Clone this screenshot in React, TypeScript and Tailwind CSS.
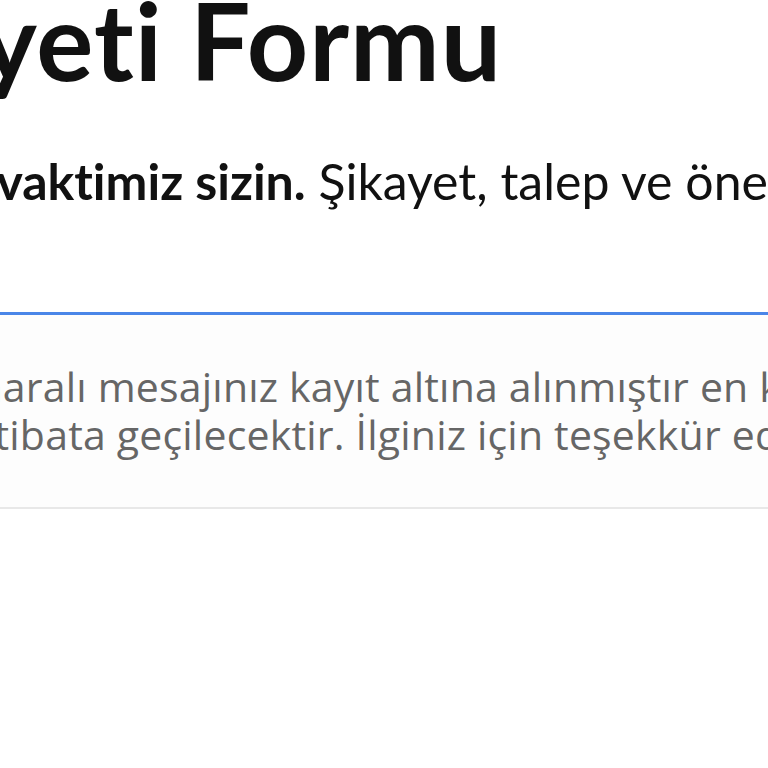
import React from "react";

export default function App() {
  return (
    <div className="w-[768px] h-[768px] overflow-hidden bg-white">
      <div className="flex flex-col w-[1400px]">
        <h1
          className="whitespace-nowrap text-[107px] leading-none font-bold tracking-[1px] [font-variant-ligatures:none] text-[#111] ml-[-219px] mt-[-14px] h-[140px]"
          style={{ fontFamily: "Lato, 'Noto Sans', sans-serif" }}
        >
          Şikayeti Formu
        </h1>
        <p
          className="whitespace-nowrap text-[50px] leading-none text-[#111] [font-variant-ligatures:none] ml-[-110px] mt-[30px] h-[50px]"
          style={{ fontFamily: "Lato, 'Noto Sans', sans-serif" }}
        >
          <span className="font-bold">Tüm vaktimiz sizin.</span> Şikayet, talep ve önerilerinizi bize iletin.
        </p>
        <div className="mt-[106px] border-t-[3px] border-[#4a86e8] w-[1400px]" />
        <div className="bg-[#fdfdfd] border-b-2 border-[#e8e8e8] pt-[47px] pb-[49px] w-[1400px]">
          <p
            className="text-[41px] leading-[48px] text-[#666] whitespace-nowrap tracking-[0.2px] [font-stretch:90%]"
            style={{ fontFamily: "'Open Sans', Roboto, sans-serif" }}
          >
            <span className="block ml-[-86px]">numaralı mesajınız kayıt altına alınmıştır en kısa sürede sizinle</span>
            <span className="block ml-[-33px]">irtibata geçilecektir. İlginiz için teşekkür ederiz.</span>
          </p>
        </div>
      </div>
    </div>
  );
}
